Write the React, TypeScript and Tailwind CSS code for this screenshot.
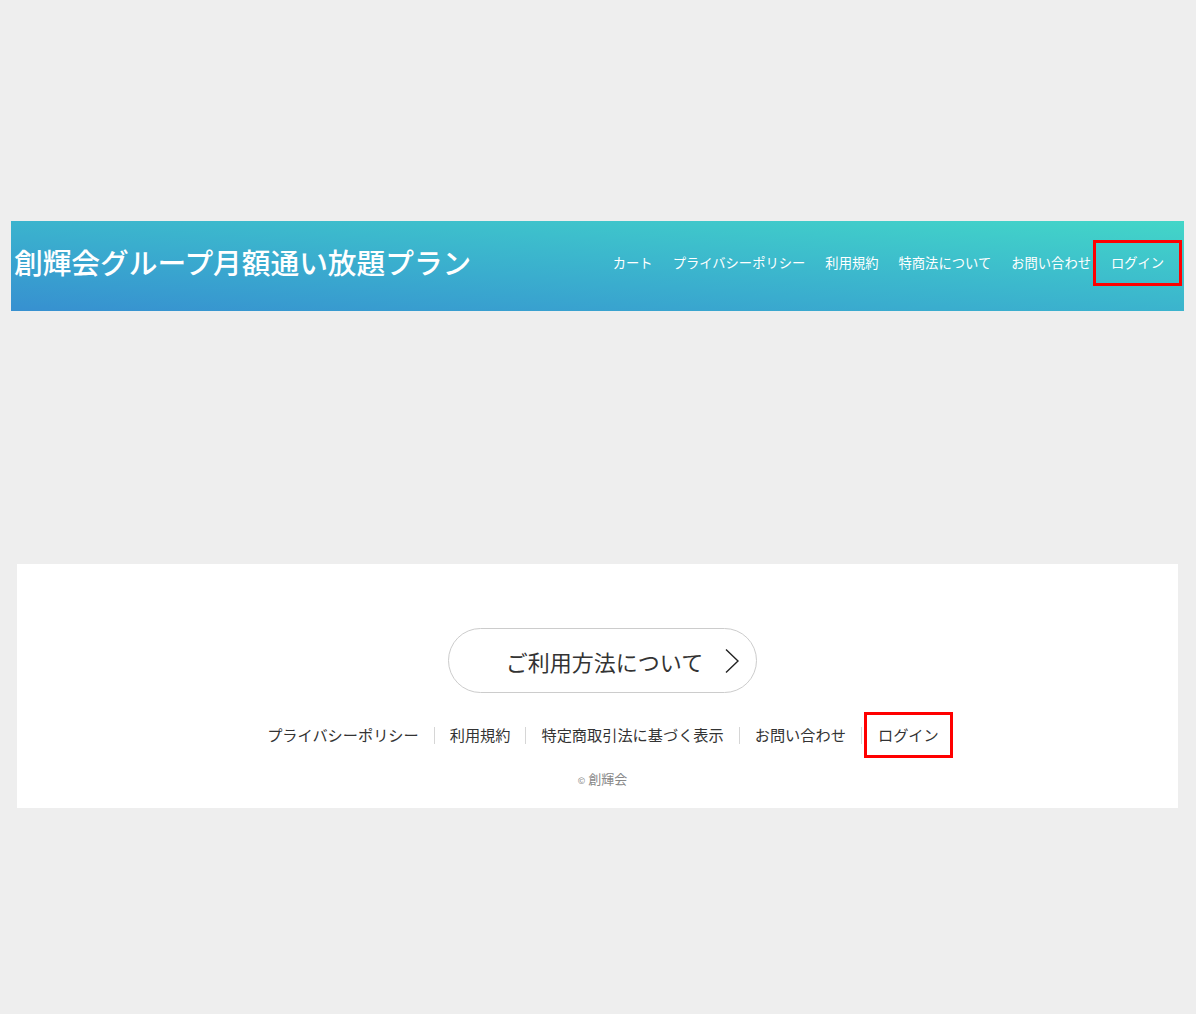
import React from 'react';

const font = { fontFamily: '"Noto Sans CJK JP", "Noto Sans", sans-serif' };

const headerNav = ['カート', 'プライバシーポリシー', '利用規約', '特商法について', 'お問い合わせ'];
const footerNav = ['プライバシーポリシー', '利用規約', '特定商取引法に基づく表示', 'お問い合わせ'];

export default function App() {
    return (
        <div className="min-h-[1014px] w-full bg-[#eeeeee] pt-[221px] pb-[206px]" style={font}>
            <header className="ml-[11px] mr-[12px] h-[90px] flex items-center justify-between bg-linear-to-tr from-[#3790d0] to-[#43d6c8] pl-[3px] pr-[2px] pb-[6px]">
                <h1 className="text-[28.7px] font-medium text-white leading-none tracking-[0px] pb-[2px]">
                    創輝会グループ月額通い放題プラン
                </h1>
                <nav className="flex items-center">
                    {headerNav.map((item) => (
                        <a key={item} className="text-[13.3px] text-white mx-[10px] leading-none">
                            {item}
                        </a>
                    ))}
                    <a className="ml-[-8px] h-[46px] w-[89px] flex items-center justify-center border-[3px] border-[#ff0000] text-[13.3px] text-white leading-none">
                        ログイン
                    </a>
                </nav>
            </header>

            <footer className="mt-[253px] ml-[17px] mr-[18px] h-[244px] bg-white flex flex-col items-center pt-[64px] pl-[10px]">
                <a className="relative h-[65px] w-[309px] rounded-full border border-[#cccccc] flex items-center justify-center pl-[4px]">
                    <span className="text-[22px] text-[#333333] leading-none tracking-[0px]">ご利用方法について</span>
                    <svg className="absolute right-[16px] top-[19px]" width="16" height="26" viewBox="0 0 16 26" fill="none">
                        <path d="M2 1.5 L14 13 L2 24.5" stroke="#222222" strokeWidth="1.4" />
                    </svg>
                </a>

                <ul className="mt-[19px] flex items-center">
                    {footerNav.map((item) => (
                        <li key={item} className="flex items-center">
                            <span className="px-[15px] text-[15.2px] text-[#333333] leading-none">{item}</span>
                            <span className="h-[17px] w-px bg-[#d6d6d6]" />
                        </li>
                    ))}
                    <li className="ml-[2px] h-[46px] w-[89px] flex items-center justify-center border-[3px] border-[#ff0000]">
                        <span className="text-[15.2px] text-[#333333] leading-none">ログイン</span>
                    </li>
                </ul>

                <p className="mt-[14px] text-[13px] text-[#888888] leading-none">
                    <span className="text-[9px] align-middle mr-[3px]">©</span>創輝会
                </p>
            </footer>
        </div>
    );
}
